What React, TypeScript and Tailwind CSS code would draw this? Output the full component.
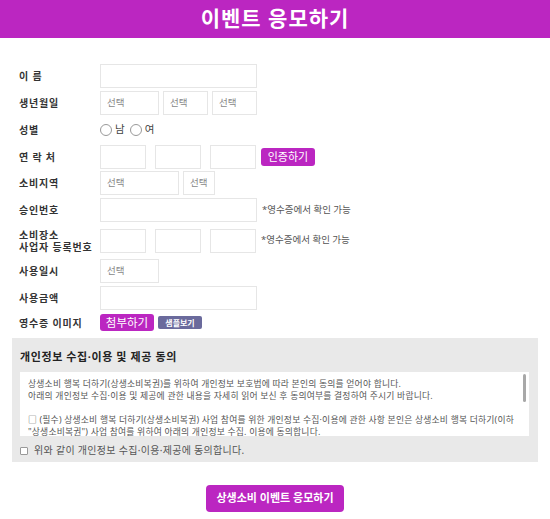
import React from "react";

const font = { fontFamily: '"Noto Sans", "Noto Sans CJK KR", sans-serif' };

function Box({ w, text }: { w: string; text?: string }) {
  return (
    <div className={`${w} h-[24px] border border-[#e6e6e6] bg-white flex items-center pl-[6px] text-[9.5px] text-[#888]`}>
      {text}
    </div>
  );
}

function Label({ children }: { children: React.ReactNode }) {
  return (
    <div className="w-[81px] shrink-0 text-[10px] font-semibold text-[#333] leading-[12px] tracking-[0.8px]">
      {children}
    </div>
  );
}

function Note() {
  return <span className="ml-[5px] text-[9.5px] text-[#555]">*영수증에서 확인 가능</span>;
}

function Radio() {
  return <span className="inline-block w-[12px] h-[12px] rounded-full border border-[#999] bg-white" />;
}

export default function App() {
  return (
    <div style={font} className="w-[550px] h-[519px] bg-white overflow-hidden">
      <div className="h-[38px] bg-[#bb26c1] flex items-center justify-center">
        <h1 className="text-[21px] font-bold text-white tracking-[1px]">이벤트 응모하기</h1>
      </div>

      <div className="pl-[19px] pt-[26px] flex flex-col gap-[3px]">
        <div className="flex items-center h-[24px]">
          <Label>이 름</Label>
          <Box w="w-[157px]" />
        </div>
        <div className="flex items-center h-[24px]">
          <Label>생년월일</Label>
          <div className="flex gap-[4px]">
            <Box w="w-[59px]" text="선택" />
            <Box w="w-[45px]" text="선택" />
            <Box w="w-[45px]" text="선택" />
          </div>
        </div>
        <div className="flex items-center h-[24px]">
          <Label>성별</Label>
          <div className="flex items-center gap-[3px] text-[10.5px] text-[#444]">
            <Radio />
            <span className="mr-[2px]">남</span>
            <Radio />
            <span>여</span>
          </div>
        </div>
        <div className="flex items-center h-[23px]">
          <Label>연 락 처</Label>
          <div className="flex gap-[9px]">
            <Box w="w-[46px]" />
            <Box w="w-[46px]" />
            <Box w="w-[46px]" />
          </div>
          <button className="ml-[5px] w-[54px] h-[18px] rounded-[3px] bg-[#bb26c1] text-white text-[11px] leading-none flex items-center justify-center">
            인증하기
          </button>
        </div>
        <div className="flex items-center h-[24px]">
          <Label>소비지역</Label>
          <div className="flex gap-[4px]">
            <Box w="w-[79px]" text="선택" />
            <Box w="w-[32px]" text="선택" />
          </div>
        </div>
        <div className="flex items-center h-[24px]">
          <Label>승인번호</Label>
          <Box w="w-[157px]" />
          <Note />
        </div>
        <div className="flex items-center h-[31px]">
          <Label>
            소비장소
            <br />
            사업자 등록번호
          </Label>
          <div className="flex gap-[9px]">
            <Box w="w-[46px]" />
            <Box w="w-[46px]" />
            <Box w="w-[46px]" />
          </div>
          <Note />
        </div>
        <div className="flex items-center h-[24px]">
          <Label>사용일시</Label>
          <Box w="w-[59px]" text="선택" />
        </div>
        <div className="flex items-center h-[24px]">
          <Label>사용금액</Label>
          <Box w="w-[157px]" />
        </div>
        <div className="flex items-center h-[19px]">
          <Label>영수증 이미지</Label>
          <button className="w-[54px] h-[17px] rounded-[3px] bg-[#bb26c1] text-white text-[11.5px] leading-none flex items-center justify-center">
            첨부하기
          </button>
          <button className="ml-[4px] w-[44px] h-[13px] rounded-[2px] bg-[#6a6a9c] text-white text-[8px] font-bold leading-none flex items-center justify-center">
            샘플보기
          </button>
        </div>
      </div>

      <div className="ml-[12px] mt-[6px] w-[526px] h-[124px] bg-[#e9e9e9] pt-[12px] px-[8px]">
        <h2 className="text-[11px] font-bold text-[#222] leading-[14px] tracking-[0.6px]">개인정보 수집·이용 및 제공 동의</h2>
        <div className="relative mt-[8px] w-[509px] h-[64px] bg-white overflow-hidden pl-[8px] pr-[14px] pt-[6px] text-[8.8px] leading-[12px] text-[#555] tracking-[0.2px]">
          <p>상생소비 행복 더하기(상생소비복권)를 위하여 개인정보 보호법에 따라 본인의 동의를 얻어야 합니다.</p>
          <p>아래의 개인정보 수집·이용 및 제공에 관한 내용을 자세히 읽어 보신 후 동의여부를 결정하여 주시기 바랍니다.</p>
          <p>&nbsp;</p>
          <p>
            □ (필수) 상생소비 행복 더하기(상생소비복권) 사업 참여를 위한 개인정보 수집·이용에 관한 사항 본인은 상생소비 행복 더하기(이하
            "상생소비복권") 사업 참여를 위하여 아래의 개인정보 수집. 이용에 동의합니다.
          </p>
          <div className="absolute right-[3px] top-[2px] w-[3px] h-[28px] rounded-full bg-[#a8a8a8]" />
        </div>
        <div className="mt-[7px] flex items-center gap-[6px] text-[10px] text-[#555] tracking-[0.3px]">
          <span className="inline-block w-[8px] h-[8px] border border-[#999] rounded-[1px] bg-white" />
          <span>위와 같이 개인정보 수집·이용·제공에 동의합니다.</span>
        </div>
      </div>

      <div className="flex justify-center mt-[23px]">
        <button className="w-[138px] h-[27px] rounded-[4px] bg-[#bb26c1] text-white text-[11px] font-bold flex items-center justify-center">
          상생소비 이벤트 응모하기
        </button>
      </div>
    </div>
  );
}
